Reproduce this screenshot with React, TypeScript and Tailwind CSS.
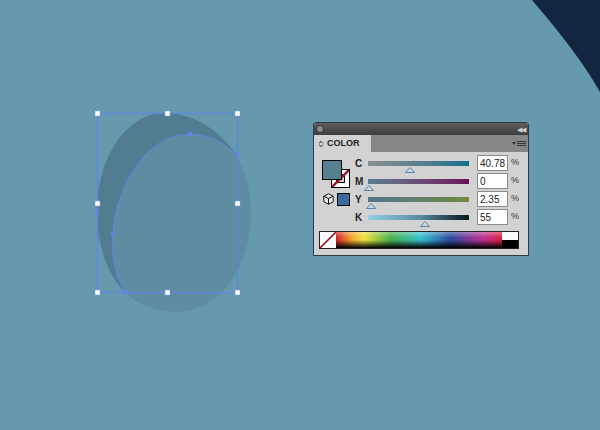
import React from "react";
import { ChevronsUpDown } from "lucide-react";

interface Channel {
  label: string;
  value: string;
  thumb: number;
  gradient: string;
}

const channels: Channel[] = [
  { label: "C", value: "40.78", thumb: 41, gradient: "bg-gradient-to-r from-[#8a8f90] to-[#0b6f8e]" },
  { label: "M", value: "0", thumb: 0, gradient: "bg-gradient-to-r from-[#55808f] to-[#6a0a5c]" },
  { label: "Y", value: "2.35", thumb: 2, gradient: "bg-gradient-to-r from-[#55748a] to-[#6f8a3a]" },
  { label: "K", value: "55", thumb: 55, gradient: "bg-gradient-to-r from-[#93d0e6] via-[#5c8ea3] to-[#0a1a20]" },
];

const handles = [
  [97, 113],
  [167, 113],
  [237, 113],
  [97, 203],
  [237, 203],
  [97, 292],
  [167, 292],
  [237, 292],
];

const Artwork: React.FC = () => (
  <svg className="absolute inset-0" width="600" height="430" viewBox="0 0 600 430">
    <path d="M532 0 C556 28 582 60 600 92 L600 0 Z" fill="#12263f" />
    <path
      d="M237 155 C245 172 251 190 251 212 C251 268 220 312 176 312 C158 312 138 306 125 292 C114 272 111 250 113 232 C118 180 150 134 190 134 C208 134 224 143 237 155 Z"
      fill="#5f8ca1"
    />
    <path
      d="M165 113 C196 113 220 132 237 155 C224 143 208 134 190 134 C150 134 118 180 113 232 C111 250 114 272 125 292 C108 276 97 246 97 212 C97 158 126 113 165 113 Z"
      fill="#527c90"
    />
    <rect x="97.5" y="113.5" width="140" height="179" fill="none" stroke="#5f86e0" strokeWidth="1.3" />
    <path
      d="M237 155 C224 143 208 134 190 134 C150 134 118 180 113 232 C111 250 114 272 125 292"
      fill="none"
      stroke="#5f86e0"
      strokeWidth="1.2"
    />
    <circle cx="190" cy="134" r="2.4" fill="#5f86e0" />
    <circle cx="113" cy="234" r="2.4" fill="#5f86e0" />
    <circle cx="237" cy="155" r="2.4" fill="#5f86e0" />
    <circle cx="97" cy="211" r="2.4" fill="#5f86e0" />
    <circle cx="125" cy="292" r="2.4" fill="#5f86e0" />
    {handles.map(([x, y]) => (
      <rect key={`${x}-${y}`} x={x - 2} y={y - 2} width="5" height="5" fill="#ffffff" stroke="#7fa0e6" strokeWidth="0.5" />
    ))}
  </svg>
);

const Thumb: React.FC<{ left: number }> = ({ left }) => (
  <svg className="absolute top-[6px]" style={{ left: `calc(${left}% - 4px)` }} width="10" height="6" viewBox="0 0 10 6">
    <path d="M5 0.5 L9.5 5.5 L0.5 5.5 Z" fill="#c9d6e4" stroke="#5c82a8" strokeWidth="1" />
  </svg>
);

const ChannelRow: React.FC<{ channel: Channel }> = ({ channel }) => (
  <div className="flex h-[18px] items-center">
    <span className="w-[13px] text-[10px] font-bold text-[#222]">{channel.label}</span>
    <div className="relative h-[5px] w-[101px]">
      <div className={`h-[5px] w-full ${channel.gradient}`} />
      <Thumb left={channel.thumb} />
    </div>
    <div className="ml-2 flex h-[16px] w-[31px] items-center border border-[#8a8a8a] bg-white pl-[2px] text-[10px] text-[#222]">
      {channel.value}
    </div>
    <span className="ml-[3px] text-[9px] text-[#333]">%</span>
  </div>
);

const ColorPanel: React.FC = () => (
  <div className="absolute left-[313px] top-[122px] flex h-[134px] w-[216px] flex-col overflow-hidden rounded-t-[3px] border border-[#2c3a42] bg-[#d2d2d2] font-['Liberation_Sans',sans-serif]">
    <div className="flex h-[12px] items-center justify-between bg-gradient-to-b from-[#5e5e5e] to-[#3c3c3c] pl-[2px] pr-[3px]">
      <div className="h-[8px] w-[8px] rounded-full border border-[#333] bg-[#8c8c8c]" />
      <span className="text-[7px] leading-none tracking-[-1px] text-[#cfcfcf]">◀◀</span>
    </div>
    <div className="flex h-[17px] items-stretch bg-[#868686]">
      <div className="flex w-[57px] items-center gap-[2px] bg-[#d2d2d2] pl-[3px]">
        <ChevronsUpDown size={8} strokeWidth={3} className="text-[#222]" />
        <span className="text-[9px] font-bold text-[#222]">COLOR</span>
      </div>
      <div className="flex flex-1 items-center justify-end gap-[1px] pr-[2px]">
        <span className="h-0 w-0 border-x-[2px] border-t-[3px] border-x-transparent border-t-[#333]" />
        <div className="flex w-[9px] flex-col gap-[1px]">
          <div className="h-px bg-[#333]" />
          <div className="h-px bg-[#333]" />
          <div className="h-px bg-[#333]" />
        </div>
      </div>
    </div>
    <div className="flex pl-[8px] pt-[2px]">
      <div className="relative mr-[3px] w-[30px]">
        <div className="absolute left-[9px] top-[15px] h-[19px] w-[19px] overflow-hidden border border-black bg-white">
          <div className="absolute left-[4px] top-[4px] h-[9px] w-[9px] border border-black bg-[#d2d2d2]" />
          <svg className="absolute inset-0" width="17" height="17" viewBox="0 0 17 17">
            <path d="M0 17 L17 0" stroke="#a01530" strokeWidth="2.5" />
          </svg>
        </div>
        <div className="absolute left-0 top-[6px] h-[20px] w-[20px] border border-black bg-[#55808f]" />
        <svg className="absolute left-[1px] top-[39px]" width="11" height="12" viewBox="0 0 11 12">
          <path
            d="M5.5 0.8 L10.2 3.2 L10.2 8.8 L5.5 11.2 L0.8 8.8 L0.8 3.2 Z M0.8 3.2 L5.5 5.6 L10.2 3.2 M5.5 5.6 L5.5 11.2"
            fill="#ececec"
            stroke="#111"
            strokeWidth="1"
            strokeLinejoin="round"
          />
        </svg>
        <div className="absolute left-[15px] top-[39px] h-[13px] w-[13px] border border-black bg-[#3b6b9c]" />
      </div>
      <div className="flex flex-col">
        {channels.map((channel) => (
          <ChannelRow key={channel.label} channel={channel} />
        ))}
      </div>
    </div>
    <div className="ml-[5px] mt-[5px] flex h-[18px] w-[200px] border border-[#222]">
      <div className="relative h-full w-[16px] overflow-hidden bg-white">
        <svg className="absolute inset-0" width="16" height="16" viewBox="0 0 16 16">
          <path d="M0 16 L16 0" stroke="#a01530" strokeWidth="1.6" />
        </svg>
      </div>
      <div className="relative flex-1 bg-[linear-gradient(to_right,#d0202a_0%,#f0a030_9%,#f2e040_17%,#48b04a_33%,#35c0d0_51%,#2c4a9c_69%,#c0308f_89%,#d8203a_100%)]">
        <div className="absolute inset-0 bg-[linear-gradient(to_bottom,rgba(255,255,255,0.35)_0%,rgba(255,255,255,0)_35%,rgba(0,0,0,0)_50%,rgba(0,0,0,1)_100%)]" />
      </div>
      <div className="flex w-[16px] flex-col">
        <div className="h-1/2 bg-white" />
        <div className="h-1/2 bg-black" />
      </div>
    </div>
  </div>
);

const App: React.FC = () => {
  return (
    <div className="relative h-[430px] w-[600px] overflow-hidden bg-[#6699ae]">
      <Artwork />
      <ColorPanel />
    </div>
  );
};

export default App;
